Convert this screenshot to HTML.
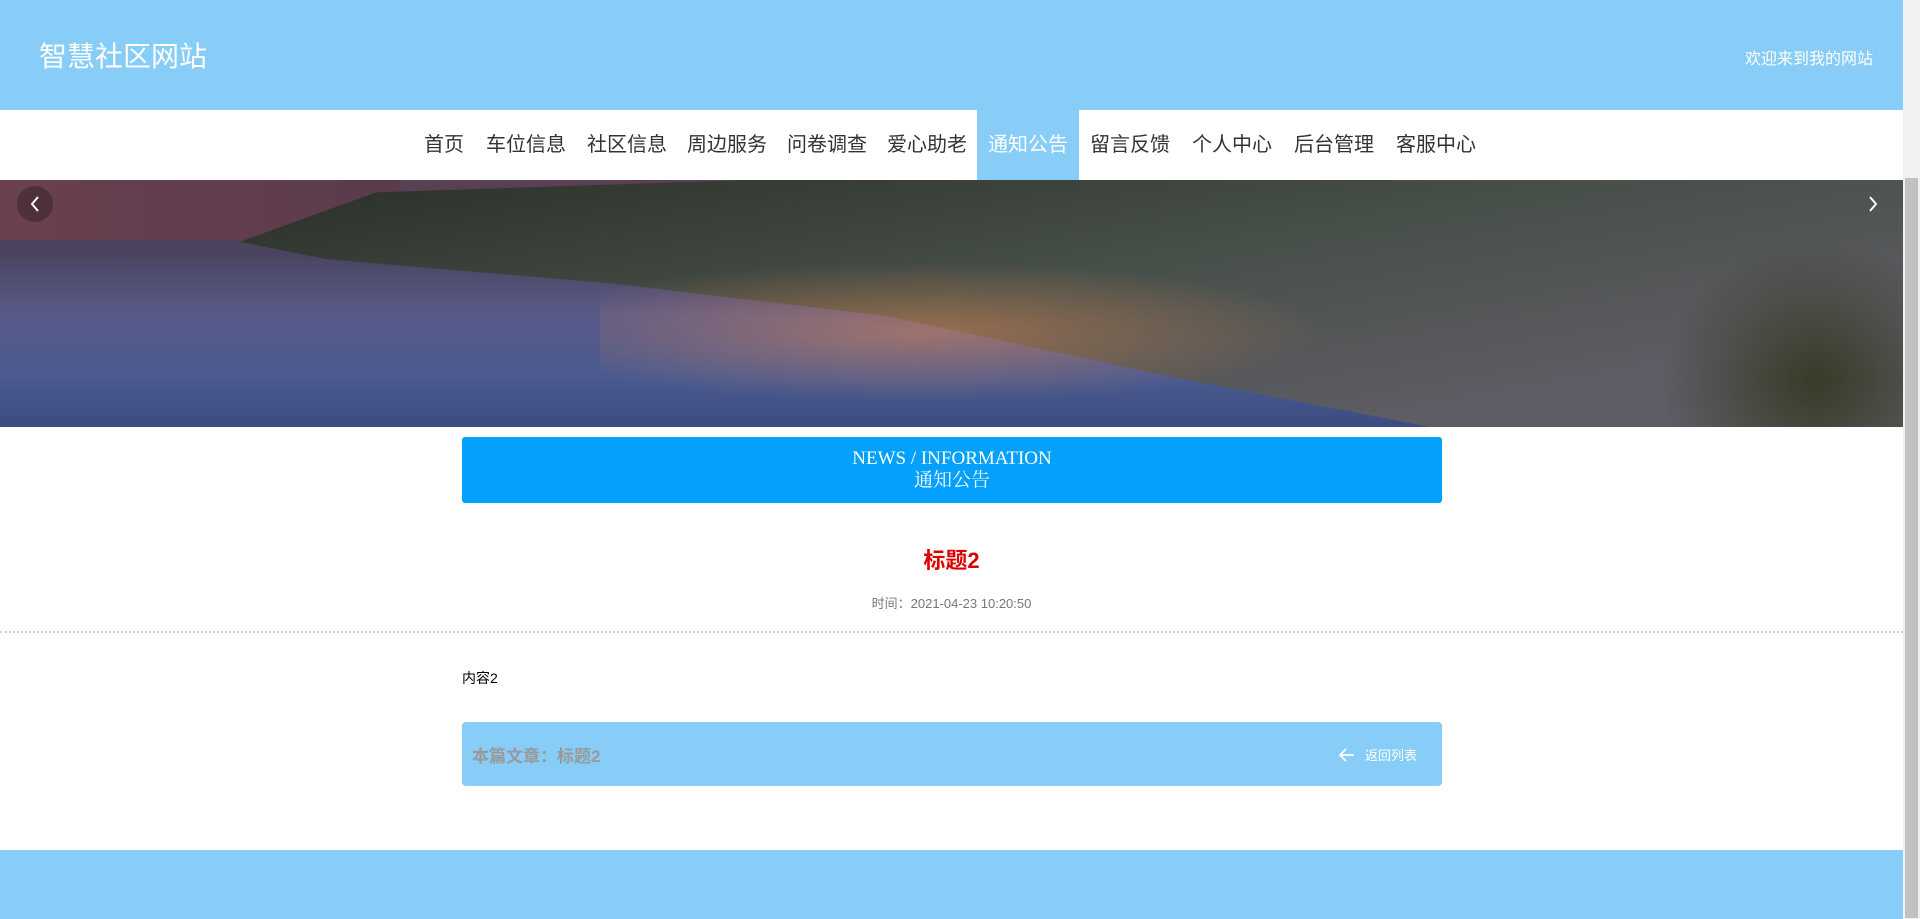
<!DOCTYPE html>
<html><head><meta charset="utf-8"><style>
*{margin:0;padding:0;box-sizing:border-box}
body{width:1920px;height:919px;overflow:hidden;background:#fff;font-family:"Liberation Sans","Noto Sans CJK SC",sans-serif;position:relative}
.sb{position:absolute;right:0;top:0;width:17px;height:919px;background:#f1f1f1}
.sb div{position:absolute;left:2px;right:2px;top:178px;height:740px;background:#c1c1c1}
.hd{position:absolute;left:0;top:0;width:1903px;height:110px;background:#87cdf8}
.hd .t{position:absolute;left:39px;top:35px;font-size:28px;color:#fff}
.hd .r{position:absolute;right:30px;top:45px;font-size:16px;color:#fff}
.nav{position:absolute;top:110px;left:413px;height:70px;display:flex;white-space:nowrap}
.nav a{display:block;height:70px;line-height:70px;font-size:20px;color:#333;padding:0 11px}
.nav a.on{background:#87cdf8;color:#fff}
.ban{position:absolute;top:180px;left:0;width:1903px;height:247px;overflow:hidden;
background:linear-gradient(180deg,#5a4052 0%,#4a4460 30%,#5a5a88 55%,#4a5a90 80%,#3a4c80 100%)}
.ban .hill{position:absolute;left:240px;top:0;width:1700px;height:247px;background:linear-gradient(170deg,#2a3028,#48504a 45%,#5e5c64 80%);clip-path:polygon(0 25%,8% 5%,30% 0,100% 0,100% 100%,70% 100%,55% 80%,38% 55%,22% 42%,5% 32%)}
.ban .sky{position:absolute;left:0;top:0;width:400px;height:60px;background:linear-gradient(90deg,#6a4050,#5a3c4c)}
.ban .lights{position:absolute;left:600px;top:70px;width:800px;height:150px;background:radial-gradient(ellipse at 40% 55%,rgba(230,140,80,.5),transparent 60%)}
.ban .tree{position:absolute;left:1660px;top:60px;width:260px;height:200px;background:radial-gradient(ellipse at 60% 70%,#3a3a28,transparent 70%)}
.dots{position:absolute;left:904px;top:393px;width:92px;height:18px;border-radius:9px;background:rgba(0,0,0,.3);display:flex;gap:4px;padding:3px 5px}
.dots i{display:block;height:12px;border-radius:6px;background:#fff;width:20px}
.dots i:first-child{background:#87cdf8;width:30px}
.arr{position:absolute;top:6px;width:36px;height:36px;border-radius:50%;display:flex;align-items:center;justify-content:center}
.box{position:absolute;left:462px;top:437px;width:980px;height:66px;background:#03a0fe;border-radius:3px;color:#fff;text-align:center;font-family:"Liberation Serif","Noto Serif CJK SC",serif;font-size:19px;line-height:22px;padding-top:11px}
.tt{position:absolute;left:0;width:1903px;text-align:center;top:543px;font-size:22px;font-weight:bold;color:#d00}
.tm{position:absolute;left:0;width:1903px;text-align:center;top:593px;font-size:13px;color:#777}
.ln{position:absolute;left:0;top:631px;width:1903px;border-top:2px dotted #ccc}
.ct{position:absolute;left:462px;top:668px;font-size:14px;color:#000}
.bar{position:absolute;left:462px;top:722px;width:980px;height:64px;background:#87cdf8;border-radius:4px}
.bar .l{position:absolute;left:10px;top:20px;font-size:17px;font-weight:bold;color:#999}
.bar .r{position:absolute;right:25px;top:23px;font-size:13px;color:#fff;display:flex;align-items:center}
.ft{position:absolute;left:0;top:850px;width:1903px;height:69px;background:#87cdf8}
</style></head><body>
<div class="hd"><div class="t">智慧社区网站</div><div class="r">欢迎来到我的网站</div></div>
<div class="nav"><a>首页</a><a>车位信息</a><a style="padding:0 10px">社区信息</a><a style="padding:0 10px">周边服务</a><a style="padding:0 10px">问卷调查</a><a style="padding:0 10px">爱心助老</a><a class="on">通知公告</a><a>留言反馈</a><a>个人中心</a><a>后台管理</a><a>客服中心</a></div>
<div class="ban"><div class="sky"></div><div class="hill"></div><div class="lights"></div><div class="tree"></div>
<div class="dots"><i></i><i></i><i></i></div>
<div class="arr" style="left:17px;background:rgba(0,0,0,.25)"><svg width="12" height="18" viewBox="0 0 12 18"><path d="M9 2L3 9l6 7" stroke="#fff" stroke-width="2" fill="none"/></svg></div>
<div class="arr" style="right:12px"><svg width="12" height="18" viewBox="0 0 12 18"><path d="M3 2l6 7-6 7" stroke="#fff" stroke-width="2" fill="none"/></svg></div></div>
<div class="box">NEWS / INFORMATION<br>通知公告</div>
<div class="tt">标题2</div>
<div class="tm">时间：2021-04-23 10:20:50</div>
<div class="ln"></div>
<div class="ct">内容2</div>
<div class="bar"><div class="l">本篇文章：标题2</div><div class="r"><svg width="18" height="16" viewBox="0 0 18 16" style="margin-right:9px"><path d="M16 8H2M8 2L2 8l6 6" stroke="#fff" stroke-width="1.8" fill="none"/></svg>返回列表</div></div>
<div class="ft"></div>
<div class="sb"><div></div></div>
</body></html>
